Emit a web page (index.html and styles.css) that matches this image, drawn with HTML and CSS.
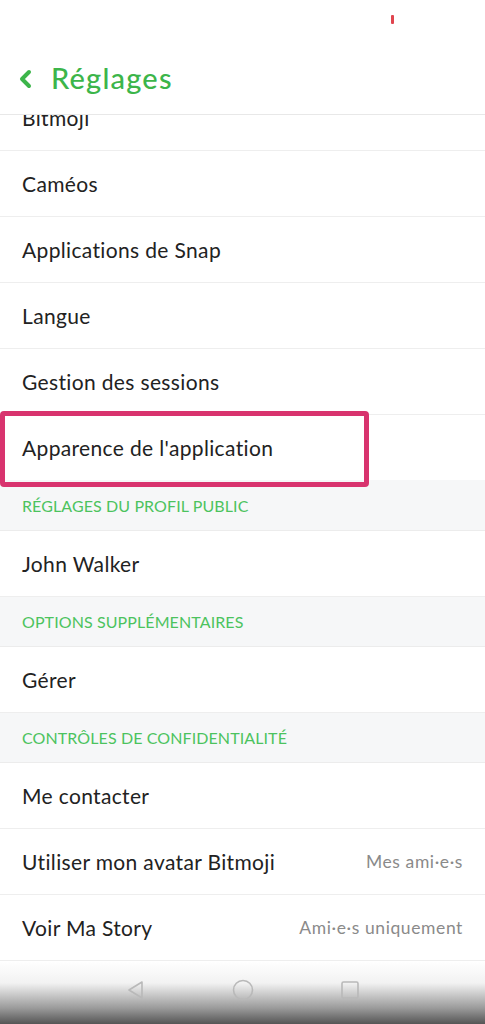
FILE: index.html
```html
<!DOCTYPE html>
<html lang="fr">
<head>
  <meta charset="UTF-8">
  <meta name="viewport" content="width=device-width, initial-scale=1.0">
  <title>Réglages</title>
  <link rel="stylesheet" href="styles.css">
</head>
<body>
  <div class="phone">
    <div class="status-bar">
      <span class="red-mark"></span>
    </div>

    <div class="header">
      <svg class="back" width="16" height="20" viewBox="0 0 16 20">
        <path d="M12 3 L5 10 L12 17" fill="none" stroke="#3cb54a" stroke-width="4" stroke-linecap="round" stroke-linejoin="round"/>
      </svg>
      <h1>Réglages</h1>
    </div>

    <div class="list-wrap">
      <div class="list">
        <div class="row">Bitmoji</div>
        <div class="row">Caméos</div>
        <div class="row">Applications de Snap</div>
        <div class="row">Langue</div>
        <div class="row">Gestion des sessions</div>
        <div class="row highlight-row">
          Apparence de l'application
          <span class="highlight"></span>
        </div>
        <div class="section">RÉGLAGES DU PROFIL PUBLIC</div>
        <div class="row">John Walker</div>
        <div class="section">OPTIONS SUPPLÉMENTAIRES</div>
        <div class="row">Gérer</div>
        <div class="section">CONTRÔLES DE CONFIDENTIALITÉ</div>
        <div class="row">Me contacter</div>
        <div class="row">Utiliser mon avatar Bitmoji <span class="value">Mes ami·e·s</span></div>
        <div class="row">Voir Ma Story <span class="value">Ami·e·s uniquement</span></div>
      </div>
    </div>

    <div class="nav-bar">
      <svg width="20" height="20" viewBox="0 0 20 20">
        <path d="M16 2 L3 10 L16 18 Z" fill="none" stroke="#b9b9b9" stroke-width="1.6" stroke-linejoin="round"/>
      </svg>
      <svg width="22" height="22" viewBox="0 0 22 22">
        <circle cx="11" cy="11" r="9.5" fill="none" stroke="#b9b9b9" stroke-width="1.6"/>
      </svg>
      <svg width="20" height="20" viewBox="0 0 20 20">
        <rect x="2" y="2" width="16" height="16" rx="1.5" fill="none" stroke="#b9b9b9" stroke-width="1.6"/>
      </svg>
    </div>
  </div>
</body>
</html>
```

FILE: styles.css
```css
body {
  margin: 0;
  padding: 0;
  background: #ffffff;
  font-family: Lato, "Open Sans", sans-serif;
  color: #222222;
}
.phone {
  width: 485px;
  height: 1024px;
  display: flex;
  flex-direction: column;
  overflow: hidden;
}
.status-bar {
  height: 48px;
  display: flex;
  justify-content: flex-end;
  padding-right: 91px;
}
.red-mark {
  width: 3px;
  height: 9px;
  margin-top: 15px;
  background: #e0454f;
  border-radius: 1px;
}
.header {
  height: 66px;
  display: flex;
  align-items: center;
  padding-left: 17px;
  border-bottom: 1px solid #e8e8e8;
  position: relative;
  z-index: 2;
  background: #ffffff;
}
.back {
  margin-top: -4px;
}
.header h1 {
  margin: 0 0 0 18px;
  font-size: 29px;
  font-weight: 500;
  letter-spacing: 1.2px;
  color: #3cb54a;
  padding-bottom: 8px;
}
.list-wrap {
  height: 846px;
  overflow: hidden;
}
.list {
  margin-top: -30px;
}
.row {
  height: 65px;
  border-bottom: 1px solid #eeeeee;
  display: flex;
  align-items: center;
  justify-content: space-between;
  padding: 0 22px;
  font-size: 21px;
  letter-spacing: 0.35px;
  position: relative;
}
.value {
  font-size: 17.5px;
  letter-spacing: 0.6px;
  color: #8a8a8a;
}
.section {
  height: 49px;
  border-bottom: 1px solid #ececec;
  background: #f6f7f8;
  display: flex;
  align-items: center;
  padding: 0 22px;
  font-size: 16px;
  color: #4cc35e;
  letter-spacing: 0.1px;
}
.highlight-row {
  border-bottom-color: #f6f7f8;
}
.highlight {
  position: absolute;
  left: 0;
  top: -4px;
  width: 359px;
  height: 66px;
  border: 5px solid #d8336e;
  border-radius: 4px;
}
.nav-bar {
  flex: 1;
  display: flex;
  justify-content: center;
  align-items: center;
  gap: 86px;
  padding-bottom: 6px;
  background: linear-gradient(to bottom, #ffffff 0%, #f2f2f2 35%, #9a9a9a 75%, #555555 100%);
}
```
